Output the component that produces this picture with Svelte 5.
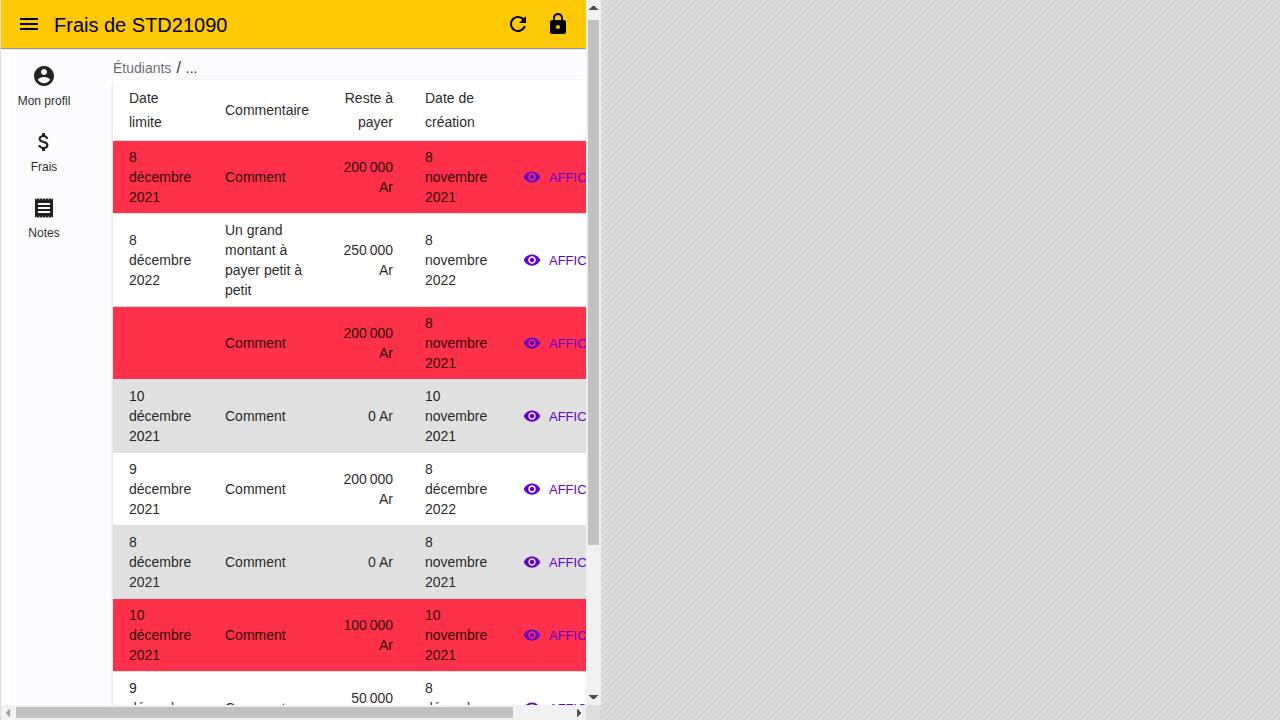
<script>
  const nav = [
    { label: 'Mon profil', icon: 'M12 2C6.48 2 2 6.48 2 12s4.48 10 10 10 10-4.480 10-10S17.520 2 12 2zm0 3c1.660 0 3 1.340 3 3s-1.340 3-3 3-3-1.340-3-3 1.340-3 3-3zm0 14.200c-2.500 0-4.710-1.280-6-3.220.03-1.990 4-3.080 6-3.080 1.990 0 5.970 1.090 6 3.080-1.290 1.940-3.500 3.220-6 3.220z' },
    { label: 'Frais', icon: 'M11.8 10.900c-2.270-.59-3-1.200-3-2.150 0-1.090 1.010-1.850 2.700-1.850 1.780 0 2.440.85 2.500 2.100h2.210c-.07-1.720-1.120-3.300-3.210-3.810V3h-3v2.160c-1.940.42-3.500 1.680-3.500 3.610 0 2.310 1.910 3.460 4.700 4.130 2.500.6 3 1.480 3 2.410 0 .69-.49 1.790-2.700 1.790-2.060 0-2.870-.92-2.980-2.100h-2.200c.12 2.190 1.760 3.420 3.680 3.830V21h3v-2.150c1.950-.37 3.500-1.500 3.500-3.550 0-2.840-2.430-3.810-4.700-4.400z' },
    { label: 'Notes', icon: 'M18 17H6v-2h12v2zm0-4H6v-2h12v2zm0-4H6V7h12v2zM3 22l1.500-1.500L6 22l1.500-1.500L9 22l1.500-1.500L12 22l1.500-1.500L15 22l1.500-1.500L18 22l1.500-1.500L21 22V2l-1.500 1.500L18 2l-1.500 1.500L15 2l-1.500 1.500L12 2l-1.500 1.500L9 2 7.500 3.500 6 2 4.500 3.500 3 2v20z' }
  ];
  const fees = [
    { due: '8 décembre 2021', comment: 'Comment', rest: 200000, created: '8 novembre 2021', status: 'late' },
    { due: '8 décembre 2022', comment: 'Un grand montant à payer petit à petit', rest: 250000, created: '8 novembre 2022', status: '' },
    { due: '', comment: 'Comment', rest: 200000, created: '8 novembre 2021', status: 'late' },
    { due: '10 décembre 2021', comment: 'Comment', rest: 0, created: '10 novembre 2021', status: 'paid' },
    { due: '9 décembre 2021', comment: 'Comment', rest: 200000, created: '8 décembre 2022', status: '' },
    { due: '8 décembre 2021', comment: 'Comment', rest: 0, created: '8 novembre 2021', status: 'paid' },
    { due: '10 décembre 2021', comment: 'Comment', rest: 100000, created: '10 novembre 2021', status: 'late' },
    { due: '9 décembre 2021', comment: 'Comment', rest: 50000, created: '8 décembre 2021', status: '' }
  ];
  const amount = (n) => String(n).replace(/\B(?=(\d{3})+$)/g, '\u202f') + ' Ar';
</script>

<div class="desk">
  <div class="frame">
    <div class="page">
      <header>
        <button class="icon" aria-label="Menu"><svg viewBox="0 0 24 24"><path d="M3 18h18v-2H3v2zm0-5h18v-2H3v2zm0-7v2h18V6H3z" /></svg></button>
        <h1>Frais de STD21090</h1>
        <button class="icon" aria-label="Actualiser"><svg viewBox="0 0 24 24"><path d="M17.650 6.350C16.200 4.900 14.210 4 12 4c-4.420 0-7.990 3.580-7.990 8s3.570 8 7.990 8c3.730 0 6.840-2.550 7.730-6h-2.080c-.82 2.330-3.040 4-5.650 4-3.310 0-6-2.690-6-6s2.690-6 6-6c1.660 0 3.140.69 4.220 1.780L13 11h7V4l-2.350 2.350z" /></svg></button>
        <button class="icon" aria-label="Profil"><svg viewBox="0 0 24 24"><path d="M18 8h-1V6c0-2.760-2.240-5-5-5S7 3.240 7 6v2H6c-1.100 0-2 .9-2 2v10c0 1.100.9 2 2 2h12c1.100 0 2-.9 2-2V10c0-1.100-.9-2-2-2zm-6 9c-1.100 0-2-.9-2-2s.9-2 2-2 2 .9 2 2-.9 2-2 2zm3.100-9H8.900V6c0-1.710 1.390-3.100 3.100-3.100 1.710 0 3.100 1.390 3.100 3.100v2z" /></svg></button>
      </header>
      <div class="body">
        <nav>
          {#each nav as item}
            <a href="#top"><svg viewBox="0 0 24 24"><path d={item.icon} /></svg><span>{item.label}</span></a>
          {/each}
        </nav>
        <main>
          <div class="crumbs"><a href="#top">Étudiants</a><span class="slash">/</span><span>...</span></div>
          <div class="card">
            <table>
              <colgroup><col class="date" /><col class="comment" /><col class="rest" /><col class="date" /><col class="action" /></colgroup>
              <thead>
                <tr><th>Date limite</th><th>Commentaire</th><th class="num">Reste à payer</th><th>Date de création</th><th></th></tr>
              </thead>
              <tbody>
                {#each fees as fee}
                  <tr class={fee.status}>
                    <td>{fee.due}</td>
                    <td>{fee.comment}</td>
                    <td class="num">{amount(fee.rest)}</td>
                    <td>{fee.created}</td>
                    <td><a class="show" href="#top"><svg viewBox="0 0 24 24"><path d="M12 4.500C7 4.500 2.730 7.610 1 12c1.730 4.390 6 7.500 11 7.500s9.270-3.110 11-7.500c-1.730-4.390-6-7.500-11-7.500zM12 17c-2.760 0-5-2.240-5-5s2.240-5 5-5 5 2.240 5 5-2.240 5-5 5zm0-8c-1.660 0-3 1.340-3 3s1.340 3 3 3 3-1.340 3-3-1.340-3-3-3z" /></svg>AFFICHER</a></td>
                  </tr>
                {/each}
              </tbody>
            </table>
          </div>
        </main>
      </div>
    </div>
    <div class="bar vertical" aria-hidden="true">
      <svg viewBox="0 0 15 15"><path d="M3 10h9v-1h-1v-1h-1v-1h-1v-1H6v1H5v1H4v1H3z" /></svg>
      <div class="track"><div class="thumb"></div></div>
      <svg viewBox="0 0 15 15"><path d="M3 5h9v1h-1v1h-1v1H9v1H6V8H5V7H4V6H3z" /></svg>
    </div>
    <div class="bar horizontal" aria-hidden="true">
      <svg class="off" viewBox="0 0 15 15"><path d="M9 4v8H8v-1H7v-1H6V9H5V7h1V6h1V5h1V4z" /></svg>
      <div class="track"><div class="thumb"></div></div>
      <svg viewBox="0 0 15 15"><path d="M6 4v8h1v-1h1v-1h1V9h1V7H9V6H8V5H7V4z" /></svg>
    </div>
    <div class="corner"></div>
  </div>
</div>

<style>
  .desk {
    display: grid;
    grid-template-columns: 601fr 679fr;
    height: 100vh;
    font: 14px/20px "Liberation Sans", Arial, sans-serif;
    color: rgba(0, 0, 0, 0.87);
    background: linear-gradient(135deg, #dcdcdc 0 42%, #c6c6c6 42% 58%, #dcdcdc 58%) 0 0 / 6px 6px;
  }
  .frame {
    display: grid;
    grid-template: minmax(0, 1fr) 15px / minmax(0, 1fr) 15px;
    min-height: 0;
    border-left: 1px solid #ddd;
  }
  .page { display: flex; flex-direction: column; overflow: hidden; background: #fff; }
  svg { display: block; flex: none; fill: currentColor; }
  header {
    display: flex;
    align-items: center;
    flex: none;
    height: 48px;
    padding: 0 8px;
    background: #ffc805;
    color: #000;
    box-shadow: 0 1px 1px rgba(0, 0, 0, 0.4);
    z-index: 1;
  }
  h1 { flex: 1; margin: 2px 0 0 5px; font-size: 20px; line-height: 32px; font-weight: 400; }
  .icon { padding: 8px; border: 0; background: none; color: inherit; }
  .icon svg { width: 24px; height: 24px; }
  .body { display: flex; flex: 1; min-height: 0; margin-left: 8px; background: #fcfcfe; }
  nav { flex: none; width: 70px; margin-right: 34px; padding-top: 16px; }
  nav a {
    display: flex;
    flex-direction: column;
    align-items: center;
    height: 66px;
    color: inherit;
    font-size: 12px;
    line-height: 26px;
    text-decoration: none;
  }
  nav svg { width: 24px; height: 24px; }
  main { flex: 1; min-width: 0; padding-top: 8px; }
  .crumbs { display: flex; height: 24px; line-height: 24px; }
  .crumbs a { color: rgba(0, 0, 0, 0.6); text-decoration: none; }
  .slash { margin: 0 5px; font-size: 16px; }
  .card { border-radius: 4px 0 0 0; background: #fff; box-shadow: 0 1px 3px rgba(0, 0, 0, 0.2); }
  table { width: 640px; table-layout: fixed; border-collapse: separate; border-spacing: 0; }
  .date { width: 96px; }
  .comment { width: 117px; }
  .rest { width: 83px; }
  th, td { padding: 6px 16px; border-bottom: 1px solid #e0e0e0; text-align: left; font-weight: 400; }
  th { line-height: 24px; }
  .num { text-align: right; }
  .late { background: #ff3049; }
  .paid { background: #e0e0e0; }
  .show { display: flex; align-items: center; gap: 8px; padding-left: 2px; color: #6200d0; font-size: 13px; line-height: 23px; text-decoration: none; }
  .show svg { width: 18px; height: 18px; }
  .bar { display: flex; background: #f1f1f1; color: #505050; }
  .bar svg { width: 15px; height: 15px; }
  .bar .off { color: #a3a3a3; }
  .track { flex: 1; display: grid; }
  .thumb { background: #c1c1c1; }
  .vertical { flex-direction: column; }
  .vertical .track { grid-template-rows: 525fr 145fr; padding: 5px 2px 0; }
  .horizontal .track { grid-template-columns: 497fr 58fr; padding: 2px 0; }
  .corner { background: #dcdcdc; }
</style>
